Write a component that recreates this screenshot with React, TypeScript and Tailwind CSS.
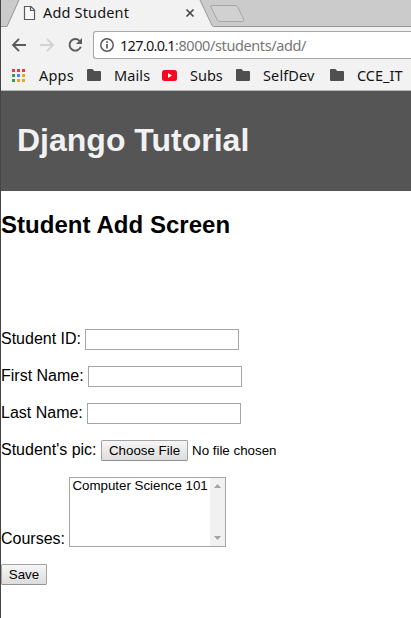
import type { ReactNode } from "react";

const uiFont = "font-['Noto_Sans','Open_Sans',sans-serif]";

function Folder() {
  return (
    <svg className="h-3 w-[14px] shrink-0" viewBox="0 0 14 12">
      <path d="M1 0H5.5L7.2 2H13Q14 2 14 3V11Q14 12 13 12H1Q0 12 0 11V1Q0 0 1 0Z" fill="#4f4f4f" />
    </svg>
  );
}

function AppsGrid() {
  const colors = ["#eb3942", "#eb3942", "#eb3942", "#359b57", "#4a87f2", "#eba51d", "#359b57", "#eba51d", "#eba51d"];
  return (
    <svg className="ml-[11px] h-[13px] w-[13px] shrink-0" viewBox="0 0 13 13">
      {colors.map((c, i) => (
        <rect key={i} x={(i % 3) * 5} y={Math.floor(i / 3) * 5} width="3" height="3" fill={c} />
      ))}
    </svg>
  );
}

function TabStrip() {
  return (
    <div className="relative flex h-[27px] items-start bg-[#cbcbcb]">
      <svg className="absolute inset-0 h-[27px] w-[410px]" viewBox="0 0 410 27">
        <path d="M0 26.5H6L18 0H199L212 26.5V27H0Z" fill="#f2f2f2" />
        <path d="M0 0H18L6 26H0Z" fill="#cbcbcb" />
        <path d="M0 26.5H6L18 0M199 0L211 25.5L212.500 26.5H410" fill="none" stroke="#969696" />
        <path d="M210.500 5.500H234Q236 5.500 237 7.500L242.500 19Q243.500 21.500 241.500 21.500H219Q217 21.500 216 19.500L210 7Q209.500 5.500 210.500 5.500Z" fill="#d1d1d1" stroke="#a5a5a5" />
        <path d="M23.500 6.500H30L33.500 10V19.500H23.500ZM29.500 6.500V10.500H33.500" fill="#fff" fillOpacity=".5" stroke="#5a5a5a" strokeWidth="1.200" />
        <path d="M185.500 9.500L192.500 16.500M192.500 9.500L185.500 16.500" stroke="#444" strokeWidth="1.600" />
      </svg>
      <span className="relative ml-[42px] w-[87px] whitespace-nowrap text-[14.500px] leading-[25px] tracking-[0.16px] text-[#151515]">Add Student</span>
    </div>
  );
}

function Toolbar() {
  return (
    <div className="flex h-8 items-start bg-[#f2f2f2] pt-1">
      <svg className="h-[27px] w-[92px] shrink-0" viewBox="0 0 92 27" fill="none" strokeWidth="1.900">
        <path d="M25 14H12.500M18 7.800L12 14L18 20.200" stroke="#5a5a5d" />
        <path d="M39 14H51.500M46 7.800L52 14L46 20.200" stroke="#d2d2d4" />
        <path d="M78.500 9.800A5.800 5.800 0 1 0 79.800 15.800" stroke="#5a5a5d" />
        <path d="M81 7V13H75Z" fill="#5a5a5d" />
      </svg>
      <div className="flex h-7 flex-1 items-center overflow-hidden rounded-l-[3px] border border-r-0 border-[#a7a7a7] bg-white">
        <svg className="ml-[6px] h-[14px] w-[14px] shrink-0" viewBox="0 0 14 14" fill="none">
          <circle cx="7" cy="7" r="6.200" stroke="#5a5a5d" strokeWidth="1.500" />
          <path d="M7 6V10.500M7 3.300V5" stroke="#5a5a5d" strokeWidth="1.700" />
        </svg>
        <span className="ml-[6px] whitespace-nowrap text-[14.500px] leading-[26px] text-[#777]">
          <span className="tracking-[-0.72px] text-[#151515]">127.0.0.1</span><span className="tracking-[-0.4px]">:8000/students/add/</span>
        </span>
      </div>
    </div>
  );
}

function Bookmarks() {
  return (
    <div className="flex h-8 items-center whitespace-nowrap border-b border-[#b5b5b5] bg-[#f2f2f2] pt-px text-[14.500px] text-[#151515] [&>span]:pt-0.5">
      <AppsGrid />
      <span className="ml-[14px] w-[48px] tracking-[0.2px]">Apps</span>
      <Folder />
      <span className="ml-[13px] w-[48px] tracking-[0.1px]">Mails</span>
      <svg className="h-[11px] w-[15px] shrink-0" viewBox="0 0 15 11">
        <rect width="15" height="11" rx="2.500" fill="#f70720" />
        <path d="M6 3L10 5.500L6 8Z" fill="#fff" />
      </svg>
      <span className="ml-[13px] w-[46px]">Subs</span>
      <Folder />
      <span className="ml-[13px] w-[67px] tracking-[0.12px]">SelfDev</span>
      <Folder />
      <span className="ml-[13px]">CCE_IT</span>
    </div>
  );
}

function FieldRow({ label, labelClass, children }: { label: string; labelClass: string; children: ReactNode }) {
  return (
    <div className="flex h-[21px] items-start">
      <label className={`shrink-0 whitespace-nowrap text-base leading-[19px] ${labelClass}`}>{label}</label>
      {children}
    </div>
  );
}

const inputStyle = "h-[21px] w-[154px] border border-[#a6a6a6] bg-white px-1 text-[13px] outline-none";
const buttonStyle = "flex h-[21px] items-center justify-center rounded-[1.500px] border border-[#a3a3a3] border-b-[#929292] bg-gradient-to-b from-[#f6f6f6] to-[#dddddd] text-[13.333px] leading-[15px]";

export default function App() {
  return (
    <div className="h-[618px] w-[411px] overflow-hidden border-l border-[#454545] bg-white font-['Liberation_Sans',Arial,sans-serif] text-black">
      <div className={uiFont}>
        <TabStrip />
        <Toolbar />
        <Bookmarks />
      </div>
      <header className="flex h-[100px] items-center bg-[#555555] pb-0.5 pl-4">
        <h1 className="text-[32px] font-bold leading-[37px] text-[#f1f1f1]">Django Tutorial</h1>
      </header>
      <main>
        <h2 className="pt-5 text-2xl font-bold leading-[27px] tracking-[0.04px]">Student Add Screen</h2>
        <form className="mt-[91px] flex flex-col gap-4" onSubmit={(e) => e.preventDefault()}>
          <FieldRow label="Student ID:" labelClass="w-[84px]"><input className={inputStyle} /></FieldRow>
          <FieldRow label="First Name:" labelClass="w-[87px]"><input className={inputStyle} /></FieldRow>
          <FieldRow label="Last Name:" labelClass="w-[86px]"><input className={inputStyle} /></FieldRow>
          <FieldRow label="Student's pic:" labelClass="w-[100px]">
            <button type="button" className={`w-[87px] ${buttonStyle}`}>Choose File</button>
            <span className="ml-1 text-[13.333px] leading-[21px]">No file chosen</span>
          </FieldRow>
          <div className="flex h-[71px] items-end">
            <label className="w-[68px] text-base leading-[18px]">Courses:</label>
            <div className="mb-px flex h-[70px] w-[157px] border border-[#a6a6a6] bg-white">
              <div className="w-[140px] whitespace-nowrap pl-[2.500px] text-[13.333px] leading-[16px] tracking-[-0.02px]">Computer Science 101</div>
              <div className="flex w-[15px] flex-col items-center justify-between bg-[#f1f1f1] pb-[6px] pt-[6px]">
                <svg className="h-1 w-[7px]" viewBox="0 0 7 4"><path d="M0 4L3.500 0L7 4Z" fill="#a3a3a3" /></svg>
                <svg className="h-1 w-[7px]" viewBox="0 0 7 4"><path d="M0 0H7L3.500 4Z" fill="#a3a3a3" /></svg>
              </div>
            </div>
          </div>
          <button type="submit" className={`w-[46px] ${buttonStyle}`}>Save</button>
        </form>
      </main>
    </div>
  );
}
